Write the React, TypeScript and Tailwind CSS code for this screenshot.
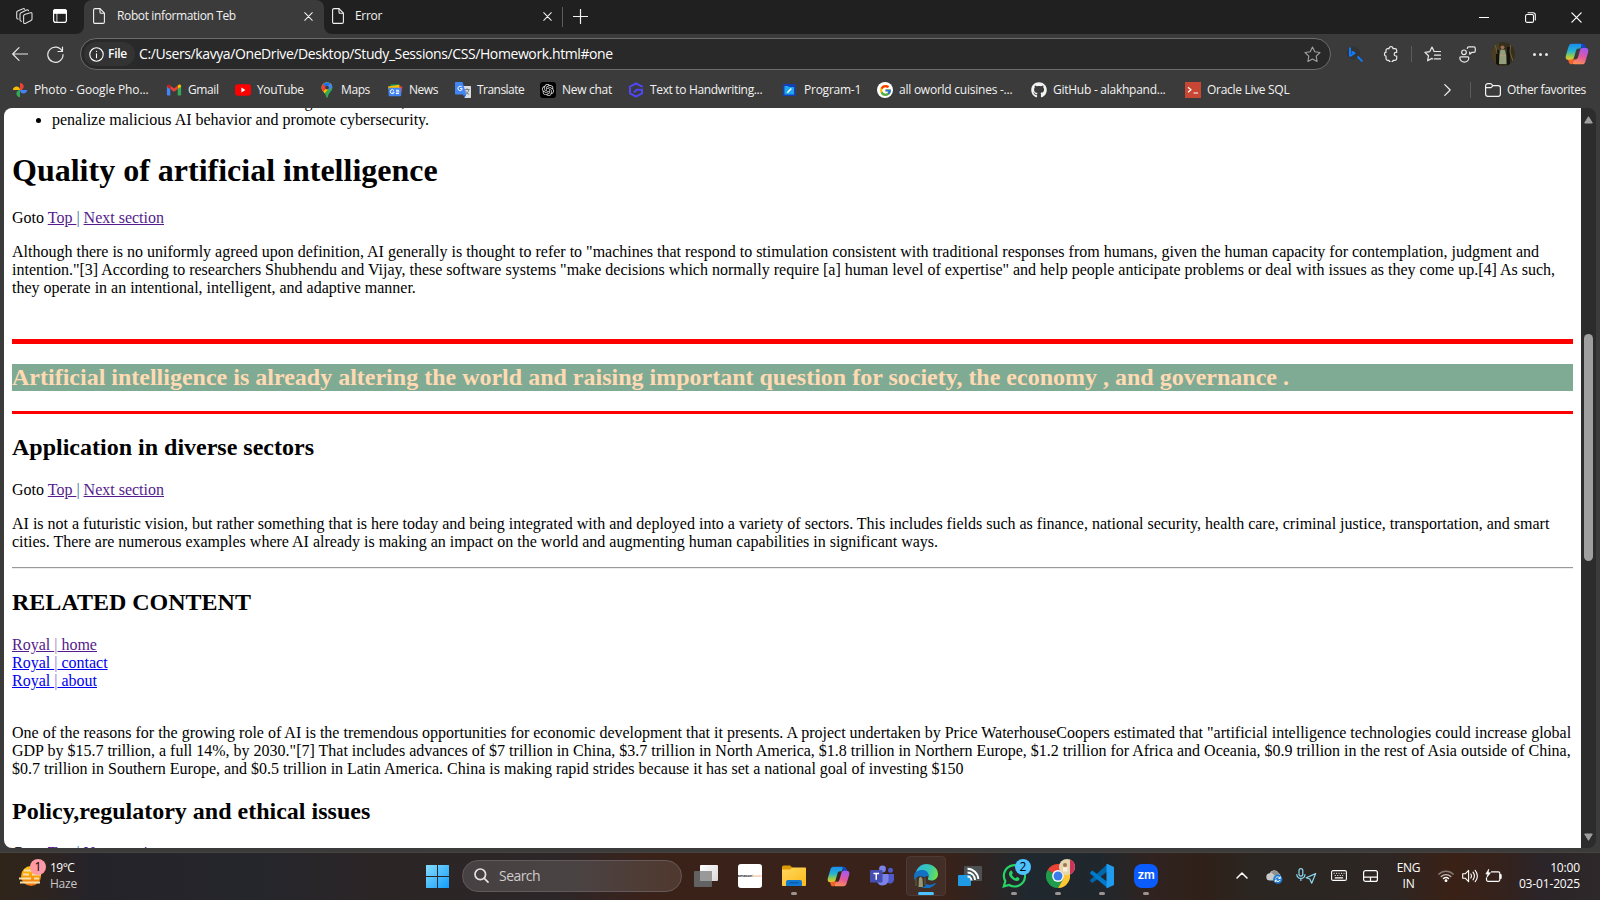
import type { ReactNode } from "react";
import { FcGoogle } from "react-icons/fc";
import { FaGithub } from "react-icons/fa";
import { SiOpenai } from "react-icons/si";

const line = { fill: "none", stroke: "currentColor", strokeLinecap: "round", strokeLinejoin: "round" } as const;

function PageIcon() {
  return (
    <svg width="12" height="16" viewBox="0 0 12 16" {...line} strokeWidth="1.1">
      <path d="M2 .6h5l4.400 4.600V14a1.400 1.400 0 0 1-1.400 1.400H2A1.400 1.400 0 0 1 .6 14V2A1.400 1.400 0 0 1 2 .6z" />
      <path d="M7 .8v3.400a1 1 0 0 0 1 1h3.200" />
    </svg>
  );
}

function CloseIcon({ size }: { size: number }) {
  return (
    <svg width={size} height={size} viewBox="0 0 10 10" {...line} strokeWidth="1.15">
      <path d="M.8.8l8.400 8.400M9.200.8L.8 9.200" />
    </svg>
  );
}

function Copilot({ size }: { size: number }) {
  return (
    <svg width={size} height={size} viewBox="0 0 24 24">
      <defs>
        <linearGradient id="cpA" x1="0" y1="0" x2="0" y2="1">
          <stop offset="0" stopColor="#1a8cf0" />
          <stop offset=".45" stopColor="#25b2d0" />
          <stop offset=".75" stopColor="#8ccb54" />
          <stop offset="1" stopColor="#f7c325" />
        </linearGradient>
        <linearGradient id="cpB" x1=".6" y1="0" x2=".3" y2="1">
          <stop offset="0" stopColor="#a459ee" />
          <stop offset=".5" stopColor="#e2589e" />
          <stop offset="1" stopColor="#fb9153" />
        </linearGradient>
      </defs>
      <path d="M16.500 4.300c-.5-1.800-1.200-2.600-2.800-2.600h4c1.700 0 2.300 1.200 2.800 3l.8 2.600h-4z" fill="#1746c4" />
      <path d="M6.800 1.700h8c1.400 0 1.900.8 1.500 2.200l-.8 2.700h-1.800c-1.500 0-2.300.8-2.800 2.400l-1.900 6.600c-.5 1.600-1.200 2.300-2.700 2.300H3.400C.9 17.900.2 16 .9 13.500L3.600 4.600C4.200 2.700 5 1.700 6.800 1.700z" fill="url(#cpA)" />
      <path d="M17.200 22.300h-8c-1.400 0-1.900-.8-1.500-2.200l.8-2.700h1.800c1.500 0 2.300-.8 2.800-2.400L15 8.400c.5-1.600 1.200-2.300 2.700-2.300h2.900c2.500 0 3.200 1.900 2.500 4.400l-2.700 8.900c-.6 1.900-1.400 2.900-3.200 2.900z" fill="url(#cpB)" />
      <path d="M7.500 17.400h3c-1 .6-1.700 1.300-2.100 2.600-.4 1.500-.6 2.300-2.200 2.300-1.500 0-2.100-1-2.500-2.500l-.5-2z" fill="#f0642f" />
    </svg>
  );
}

function PhotosLogo() {
  return (
    <svg width="16" height="16" viewBox="0 0 16 16">
      <path d="M8 1c2.200.1 3.700 1.700 3.700 3.600 0 1.600-1 2.700-2 3.400H8z" fill="#ea4335" />
      <path d="M8 8H.8C1 5.800 2.600 4.400 4.600 4.400S8 6 8 8z" fill="#fbbc04" />
      <path d="M8 8v7.200c-2.200-.2-3.600-1.800-3.600-3.800S6 8 8 8z" fill="#34a853" />
      <path d="M8 8h7.200c-.2 2.200-1.800 3.600-3.800 3.600S8 10 8 8z" fill="#4285f4" />
    </svg>
  );
}

function GmailLogo() {
  return (
    <svg width="16" height="16" viewBox="0 0 16 16">
      <path d="M.9 4v8.400c0 .7.5 1.200 1.200 1.200h2.200V7z" fill="#4285f4" />
      <path d="M15.100 4v8.400c0 .7-.5 1.200-1.200 1.200h-2.200V7z" fill="#34a853" />
      <path d="M11.700 7V3.600l.8-.7c1.100-.9 2.600-.1 2.600 1.300v.6z" fill="#fbbc04" />
      <path d="M4.300 7V3.600L8 6.400l3.700-2.800V7L8 9.800z" fill="#ea4335" />
      <path d="M.9 4.800v-.6c0-1.400 1.500-2.200 2.600-1.300l.8.7V7z" fill="#c5221f" />
    </svg>
  );
}

function YouTubeLogo() {
  return (
    <svg width="16" height="16" viewBox="0 0 16 16">
      <rect x="0" y="2.300" width="16" height="11.400" rx="3" fill="#f00" />
      <path d="M6.400 5.600v4.800l4-2.400z" fill="#fff" />
    </svg>
  );
}

function MapsLogo() {
  return (
    <svg width="16" height="16" viewBox="0 0 16 16">
      <clipPath id="pin">
        <path d="M8 .3a5.300 5.300 0 0 1 5.400 5.300c0 3.700-3.700 4.800-4.600 9.400-.2.900-1.400.9-1.600 0C6.300 10.400 2.600 9.300 2.600 5.600A5.300 5.300 0 0 1 8 .3z" />
      </clipPath>
      <g clipPath="url(#pin)">
        <rect width="16" height="16" fill="#34a853" />
        <path d="M0 0h16L4 13H0z" fill="#fbbc04" />
        <path d="M8 5.500L2 12V0h4z" fill="#ea4335" />
        <path d="M4 2l4 3.500L13 0H5z" fill="#1a73e8" />
        <path d="M8 5.500L12 1l3 3-5 4z" fill="#4285f4" />
      </g>
      <circle cx="8" cy="5.600" r="1.900" fill="#3b3b3b" />
    </svg>
  );
}

function NewsLogo() {
  return (
    <svg width="16" height="16" viewBox="0 0 16 16">
      <path d="M3.500 2.200l9 .2v5h-9z" fill="#0c9d58" />
      <path d="M1 4.600l11-1.800 1.500 4L2 9z" fill="#fbbc04" />
      <path d="M12 3.600l3.500 1.300L14 12z" fill="#ea4335" />
      <rect x="1.600" y="5.700" width="12.600" height="8.500" rx="1" fill="#4285f4" />
      <path d="M7 8.600a2 2 0 1 0 .2 1.600H5.600M9 8.300h3M9 9.900h3.400M9 11.500h3" stroke="#fff" strokeWidth="1" fill="none" />
    </svg>
  );
}

function TranslateLogo() {
  return (
    <svg width="16" height="16" viewBox="0 0 16 16">
      <path d="M6 4h9c.6 0 1 .4 1 1v10c0 .6-.4 1-1 1H9.500z" fill="#dadce0" />
      <path d="M9.500 7.500h5M12 6.300v1.200M13.800 7.700c-.5 2.200-1.800 3.700-3.600 4.600M10.400 8.700c.7 1.500 2 2.900 3.700 3.700" stroke="#6d7378" strokeWidth=".9" fill="none" />
      <path d="M1 0h6.500l3.800 12.500H1c-.6 0-1-.4-1-1V1c0-.6.400-1 1-1z" fill="#4285f4" />
      <path d="M6.800 5a2.200 2.200 0 1 0 .5 1.700H5" stroke="#fff" strokeWidth="1" fill="none" />
      <path d="M8 12.500h3.300L9.500 16z" fill="#1967d2" />
    </svg>
  );
}

function ChatLogo() {
  return (
    <span className="flex size-4 items-center justify-center rounded-[3px] bg-black text-[#e0e0e0]">
      <SiOpenai size={12} />
    </span>
  );
}

function HexLogo() {
  return (
    <svg width="16" height="16" viewBox="0 0 16 16" fill="none" stroke="#4f46f5" strokeWidth="2">
      <path d="M14 5V4.700L8 1.300 2 4.700v6.600l6 3.400 6-3.400V7.800H8.500L6 10.500" />
    </svg>
  );
}

function ProgramLogo() {
  return (
    <svg width="16" height="16" viewBox="0 0 16 16">
      <rect x="1" y="2" width="12.500" height="12" fill="#1240b8" />
      <path d="M2.500 4h3.500l1 1H12v7.500H2.500z" fill="#1ea7f0" />
      <path d="M5.300 10.800l4-4.300" stroke="#fff" strokeWidth="1.400" />
    </svg>
  );
}

function GoogleDisc() {
  return (
    <span className="flex size-4 items-center justify-center rounded-full bg-white">
      <FcGoogle size={13} />
    </span>
  );
}

function OracleLogo() {
  return (
    <svg width="16" height="16" viewBox="0 0 16 16">
      <rect width="16" height="16" fill="#c74634" />
      <path d="M3 5.200l3 2.500-3 2.500M8.500 11h4.500" stroke="#fff" strokeWidth="1.200" fill="none" />
    </svg>
  );
}

function Bookmark({ icon, label, className }: { icon: ReactNode; label: string; className: string }) {
  return (
    <div className={`flex h-full shrink-0 items-center gap-[6px] whitespace-nowrap ${className}`}>
      <span className="flex size-4 shrink-0 items-center justify-center">{icon}</span>
      <span>{label}</span>
    </div>
  );
}

function TabStrip() {
  return (
    <div className="flex h-[34px] bg-[#202020] text-[12px] text-[#f2f2f2]">
      <div className="flex w-[84px] items-center pb-[2px] pl-4">
        <svg width="17" height="17" viewBox="0 0 17 17" {...line} strokeWidth="1.100" className="text-[#dcdcdc]">
          <path d="M7.600 7.600v6.700c0 1.100.9 1.500 1.700 1.100l5.700-2.900c.7-.3 1-.8 1-1.500V5.700c0-1-.8-1.400-1.600-1L8.600 6.500c-.7.4-1 .8-1 1.600z" />
          <path d="M5.500 13.200c-1 0-1.500-.6-1.500-1.500V6.300c0-.8.300-1.200 1-1.600L10.700 2c.9-.4 1.700 0 1.800.8" />
          <path d="M2.200 11C1.200 11 .7 10.400.7 9.500V4.600c0-.8.300-1.300 1-1.600L7 .8c.9-.4 1.700 0 1.800.7" />
        </svg>
        <svg width="14" height="14" viewBox="0 0 14 14" {...line} strokeWidth="1.200" className="ml-5 text-white">
          <rect x=".6" y=".6" width="12.800" height="12.800" rx="2.200" />
          <path d="M.6 2.800C.6 1.500 1.500.6 2.800.6h8.400c1.300 0 2.200.9 2.200 2.200v1.400H.6z" fill="currentColor" />
          <path d="M3.900 4v9" strokeWidth=".8" />
        </svg>
      </div>
      <div className="relative flex w-[240px] items-center rounded-t-lg bg-[#3b3b3b] pb-[2px] pl-[9px]">
        <svg className="absolute bottom-0 -left-2" width="8" height="8"><path d="M8 0v8H0a8 8 0 0 0 8-8z" fill="#3b3b3b" /></svg>
        <svg className="absolute -right-2 bottom-0" width="8" height="8"><path d="M0 0v8h8a8 8 0 0 1-8-8z" fill="#3b3b3b" /></svg>
        <PageIcon />
        <span className="ml-3 w-[187px] tracking-[-0.370px] whitespace-nowrap">Robot information Teb</span>
        <CloseIcon size={9} />
      </div>
      <div className="flex w-[239px] items-center pb-[2px] pl-2">
        <PageIcon />
        <span className="ml-[11px] w-[188px] tracking-[-0.300px]">Error</span>
        <CloseIcon size={9} />
      </div>
      <div className="mt-[7px] -ml-px h-5 w-px bg-[#5c5c5c]" />
      <div className="ml-[10px] flex items-center pb-[2px]">
        <svg width="15" height="15" viewBox="0 0 15 15" {...line} strokeWidth="1.200"><path d="M7.500.5v14M.5 7.500h14" /></svg>
      </div>
      <div className="mr-px ml-auto flex items-center text-white">
        <div className="flex w-[46px] justify-center"><svg width="10" height="10" viewBox="0 0 10 10" {...line}><path d="M0 5.500h10" /></svg></div>
        <div className="flex w-[46px] justify-center">
          <svg width="11" height="11" viewBox="0 0 11 11" {...line} strokeWidth="1.100"><rect x=".6" y="2.500" width="7.900" height="7.900" rx="1.500" /><path d="M3 .7h5c1.400 0 2.300.9 2.300 2.300v5" /></svg>
        </div>
        <div className="flex w-[46px] justify-center"><CloseIcon size={11} /></div>
      </div>
    </div>
  );
}

function Toolbar() {
  return (
    <div className="flex h-10 items-center text-[#e8e8e8]">
      <svg width="16" height="14" viewBox="0 0 16 14" {...line} strokeWidth="1.200" className="ml-3"><path d="M15.500 7H.7M7 .7L.7 7 7 13.300" /></svg>
      <svg width="17" height="17" viewBox="0 0 17 17" {...line} strokeWidth="1.200" className="ml-[19px]"><path d="M15.200 5.300A7.600 7.600 0 1 0 16 8.600M15.500 1v4.500H11" /></svg>
      <div className="ml-4 flex h-8 w-[1251px] shrink-0 items-center rounded-full border border-[#6c6c6c] bg-[#292929] pl-[3px] text-white">
        <div className="flex h-6 w-[51px] items-center rounded-full bg-[#333333] pl-[5px]">
          <svg width="15" height="15" viewBox="0 0 15 15" {...line} strokeWidth="1.100"><circle cx="7.500" cy="7.500" r="6.700" /><path d="M7.500 6.800v4M7.500 4.300v.1" /></svg>
          <span className="ml-[4px] text-[12px] font-semibold tracking-[-0.250px]">File</span>
        </div>
        <span className="ml-[4px] text-[14px] leading-5 tracking-[-0.400px] whitespace-nowrap">C:/Users/kavya/OneDrive/Desktop/Study_Sessions/CSS/Homework.html#one</span>
        <svg width="17" height="17" viewBox="0 0 17 17" {...line} strokeWidth="1.100" className="mr-[9px] ml-auto text-[#a0a0a0]"><path d="M8.500 1l2.300 4.800 5.200.7-3.800 3.700.9 5.300-4.600-2.500-4.600 2.500.9-5.300L1 6.500l5.200-.7z" /></svg>
      </div>
      <div className="flex w-12 justify-center">
        <svg width="16" height="16" viewBox="0 0 16 16"><circle cx="6.500" cy="7" r="6.500" fill="#343434" /><path d="M3 1.500v8.300l4.500-2.600-3-1.700" fill="none" stroke="#0f7bff" strokeWidth="2" strokeLinejoin="round" /><path d="M10.500 10.500l5 5" stroke="#0f7bff" strokeWidth="1.800" /></svg>
      </div>
      <div className="flex w-6 justify-center">
        <svg width="16" height="16" viewBox="0 0 16 16" {...line} strokeWidth="1.200"><path d="M6 2.700a2 2 0 0 1 4 0H12a1.700 1.700 0 0 1 1.700 1.700v1.900H13a1.800 1.800 0 0 0 0 3.700h.7v2.600A1.700 1.700 0 0 1 12 14.300h-2a2 2 0 0 1-4 0H4.700A1.700 1.700 0 0 1 3 12.600V10.100a2 2 0 0 1 0-3.900V4.400a1.700 1.700 0 0 1 1.700-1.700z" /></svg>
      </div>
      <div className="ml-2 h-4 w-px bg-[#5c5c5c]" />
      <div className="ml-[11px] flex w-[18px] justify-center">
        <svg width="17" height="17" viewBox="0 0 17 17" {...line} strokeWidth="1.200"><path d="M10.500 5.500h-.4L8 1 5.800 5.600.9 6.300l3.600 3.500-.9 5L8 12.400l.8.500M10.500 5.500H16.500M10.500 9.200h6M10.500 12.900h6" /></svg>
      </div>
      <div className="ml-[17px] flex w-[18px] justify-center">
        <svg width="17" height="17" viewBox="0 0 17 17" {...line} strokeWidth="1.200"><circle cx="5" cy="6.300" r="2.300" /><path d="M1.800 10.800h7c.6 0 1 .4 1 1 0 2.400-1.800 4.400-4.400 4.400S.8 14.200.8 11.800c0-.6.400-1 1-1zM8.300 2.400C8.300 1.400 9 .8 9.900.8h4.800c.9 0 1.600.6 1.600 1.600v2.300c0 .9-.7 1.600-1.600 1.600H13l-2.300 1.900V6.200" /></svg>
      </div>
      <div className="ml-[15px] flex size-6 shrink-0 overflow-hidden rounded-full">
        <svg width="24" height="24" viewBox="0 0 24 24"><rect width="24" height="24" fill="#352f1c" /><path d="M0 3l8-3 1 10-4 14H0z" fill="#473e25" /><path d="M16 5h3v19h-3zM5 8h3v16H5z" fill="#14120c" /><path d="M3 0l2 6 1 6M20 0l-1 10 3 9" stroke="#716039" fill="none" /><path d="M9.500 7.500l4.500.2 1.200 6L15.500 22H8l.5-9z" fill="#939e7c" /><circle cx="11.500" cy="5.300" r="1.900" fill="#9c6d4e" /><path d="M9 13.500l3 .5 3-1" stroke="#c39a75" fill="none" /></svg>
      </div>
      <div className="ml-[17px] flex w-4 justify-center gap-[3px]">
        <i className="size-[3px] rounded-full bg-current" /><i className="size-[3px] rounded-full bg-current" /><i className="size-[3px] rounded-full bg-current" />
      </div>
      <div className="ml-[17px]"><Copilot size={24} /></div>
    </div>
  );
}

function FavoritesBar() {
  return (
    <div className="flex h-[34px] items-center pb-[2px] pl-3 text-[12px] text-[#f2f2f2]">
      <Bookmark className="w-[154px] tracking-[-0.130px]" icon={<PhotosLogo />} label="Photo - Google Pho..." />
      <Bookmark className="w-[69px] tracking-[-0.400px]" icon={<GmailLogo />} label="Gmail" />
      <Bookmark className="w-[84px] tracking-[-0.400px]" icon={<YouTubeLogo />} label="YouTube" />
      <Bookmark className="w-[68px] tracking-[-0.400px]" icon={<MapsLogo />} label="Maps" />
      <Bookmark className="w-[68px] tracking-[-0.480px]" icon={<NewsLogo />} label="News" />
      <Bookmark className="w-[85px] tracking-[-0.540px]" icon={<TranslateLogo />} label="Translate" />
      <Bookmark className="w-[88px] tracking-[-0.290px]" icon={<ChatLogo />} label="New chat" />
      <Bookmark className="w-[154px] tracking-[-0.340px]" icon={<HexLogo />} label="Text to Handwriting..." />
      <Bookmark className="w-[95px] tracking-[-0.240px]" icon={<ProgramLogo />} label="Program-1" />
      <Bookmark className="w-[154px] tracking-[-0.240px]" icon={<GoogleDisc />} label="all oworld cuisines -..." />
      <Bookmark className="w-[154px] tracking-[-0.260px]" icon={<FaGithub size={16} />} label="GitHub - alakhpand..." />
      <Bookmark className="w-[259px] tracking-[-0.300px]" icon={<OracleLogo />} label="Oracle Live SQL" />
      <svg width="7" height="12" viewBox="0 0 7 12" {...line} strokeWidth="1.200"><path d="M.8.600L6.200 6 .8 11.400" /></svg>
      <div className="mr-[14px] ml-[19px] h-4 w-px bg-[#5c5c5c]" />
      <Bookmark
        className="tracking-[-0.360px]"
        icon={<svg width="16" height="14" viewBox="0 0 16 14" {...line} strokeWidth="1.200"><path d="M.6 3C.6 1.600 1.400.7 2.800.7h2.500c.5 0 .9.2 1.200.5l1.300 1.400h5.400c1.300 0 2.200.9 2.200 2.200v6.300c0 1.300-.9 2.200-2.200 2.200H2.800C1.500 13.300.6 12.400.6 11.100zM.6 4.700h4.600c.5 0 .8-.1 1.100-.4l1.500-1.500" /></svg>}
        label="Other favorites"
      />
    </div>
  );
}

function VisitedLink({ children }: { children: ReactNode }) {
  return <a className="text-[#551a8b] underline">{children}</a>;
}

function Goto() {
  return (
    <p>
      Goto <VisitedLink>Top </VisitedLink><span className="text-[#3d6a94]">|</span> <VisitedLink>Next section</VisitedLink>
    </p>
  );
}

function Line({ children }: { children: ReactNode }) {
  return <span className="block whitespace-nowrap">{children}</span>;
}

function Bar({ color }: { color: "visited" | "plain" }) {
  return <span className={color === "visited" ? "text-[#a475b8]" : "text-[#8c68e0]"}>|</span>;
}

function Article() {
  return (
    <div className="h-[740px] w-[1577px] overflow-hidden rounded-l-lg bg-white px-2 text-black">
      <div className="-mt-[15px] font-['Liberation_Serif',serif] text-[16px] leading-[18px]">
        <ul className="list-disc pl-10">
          <li>maintain mechanisms for human oversight and control, and</li>
          <li>penalize malicious AI behavior and promote cybersecurity.</li>
        </ul>
        <h1 className="mt-[23px] text-[32px] leading-[37px] font-bold">Quality of artificial intelligence</h1>
        <div className="mt-5"><Goto /></div>
        <p className="mt-4">
          <Line>Although there is no uniformly agreed upon definition, AI generally is thought to refer to "machines that respond to stimulation consistent with traditional responses from humans, given the human capacity for contemplation, judgment and</Line>
          <Line>intention."[3] According to researchers Shubhendu and Vijay, these software systems "make decisions which normally require [a] human level of expertise" and help people anticipate problems or deal with issues as they come up.[4] As such,</Line>
          <Line>they operate in an intentional, intelligent, and adaptive manner.</Line>
        </p>
        <hr className="mt-[42px] h-[5px] border-0 bg-[#ff0000]" />
        <h2 className="mt-5 bg-[#7faa93] text-[24px] leading-[27px] font-bold text-[#ffdab3]">Artificial intelligence is already altering the world and raising important question for society, the economy , and governance .</h2>
        <hr className="mt-5 h-[3px] border-0 bg-[#ff0000]" />
        <h2 className="mt-5 text-[24px] leading-[27px] font-bold">Application in diverse sectors</h2>
        <div className="mt-5"><Goto /></div>
        <p className="mt-4">
          <Line>AI is not a futuristic vision, but rather something that is here today and being integrated with and deployed into a variety of sectors. This includes fields such as finance, national security, health care, criminal justice, transportation, and smart</Line>
          <Line>cities. There are numerous examples where AI already is making an impact on the world and augmenting human capabilities in significant ways.</Line>
        </p>
        <hr className="mt-4 h-[2px] border-t border-b border-t-[#9a9a9a] border-b-[#eeeeee]" />
        <h2 className="mt-5 text-[24px] leading-[27px] font-bold">RELATED CONTENT</h2>
        <div className="mt-5">
          <Line><a className="text-[#551a8b] underline">Royal <Bar color="visited" /> home</a></Line>
          <Line><a className="text-[#0000ee] underline">Royal <Bar color="plain" /> contact</a></Line>
          <Line><a className="text-[#0000ee] underline">Royal <Bar color="plain" /> about</a></Line>
        </div>
        <p className="mt-[34px]">
          <Line>One of the reasons for the growing role of AI is the tremendous opportunities for economic development that it presents. A project undertaken by Price WaterhouseCoopers estimated that "artificial intelligence technologies could increase global</Line>
          <Line>GDP by $15.7 trillion, a full 14%, by 2030."[7] That includes advances of $7 trillion in China, $3.7 trillion in North America, $1.8 trillion in Northern Europe, $1.2 trillion for Africa and Oceania, $0.9 trillion in the rest of Asia outside of China,</Line>
          <Line>$0.7 trillion in Southern Europe, and $0.5 trillion in Latin America. China is making rapid strides because it has set a national goal of investing $150</Line>
        </p>
        <h2 className="mt-5 text-[24px] leading-[27px] font-bold">Policy,regulatory and ethical issues</h2>
        <div className="mt-[19px]"><Goto /></div>
      </div>
    </div>
  );
}

function Scrollbar() {
  return (
    <div className="flex h-[740px] w-[15px] flex-col items-center rounded-r-lg bg-[#2c2c2c]">
      <svg width="9" height="8" viewBox="0 0 9 8" className="mt-2"><path d="M4.500.7L8.300 7H.7z" fill="#9f9f9f" stroke="#9f9f9f" strokeLinejoin="round" /></svg>
      <div className="mt-[210px] h-[227px] w-[9px] rounded-full bg-[#9f9f9f]" />
      <svg width="9" height="8" viewBox="0 0 9 8" className="mt-auto mb-[7px]"><path d="M4.500 7.300L.7 1h7.600z" fill="#9f9f9f" stroke="#9f9f9f" strokeLinejoin="round" /></svg>
    </div>
  );
}

function TaskItem({ children, mark }: { children: ReactNode; mark?: "dot" | "active" }) {
  return (
    <div className="relative flex h-10 w-11 items-center justify-center">
      {mark === "active" && <span className="absolute inset-x-[2px] inset-y-0 rounded-[4px] border border-[#4d3a34] bg-[#432e27]" />}
      <span className="relative flex size-6 items-center justify-center">{children}</span>
      {mark === "dot" && <span className="absolute bottom-px h-[3px] w-[6px] rounded-full bg-[#9b9492]" />}
      {mark === "active" && <span className="absolute bottom-px h-[3px] w-4 rounded-full bg-[#4cc2ff]" />}
    </div>
  );
}

function Taskbar() {
  return (
    <div className="flex h-12 items-center border-t border-[#47433f] bg-linear-[90deg,#30251a_0px,#2d2420_45px,#25232a_90px,#25262c_260px,#2c2526_380px,#2d2628_560px,#3a2219_650px,#38221a_950px,#20282f_1030px,#20272c_1100px,#302320_1150px,#2f2019_1200px,#2b2622_1260px,#2d2623_1390px,#3a2116_1450px,#35221c_1500px,#2b2428_1540px,#2d2829_1600px] pb-px text-[12px] text-white">
      <div className="flex w-[426px] items-center pb-px pl-[18px]">
        <div className="relative size-7">
          <svg width="24" height="28" viewBox="0 0 24 28" className="overflow-visible">
            <defs><linearGradient id="sun" x1="0" y1="0" x2="0" y2="1"><stop offset="0" stopColor="#ffc912" /><stop offset="1" stopColor="#f2700b" /></linearGradient></defs>
            <circle cx="13" cy="14" r="10" fill="url(#sun)" />
            <path d="M6 8.500h9M5 12.500h6M14 12.500h9M1 16.500h12M16 16.500h5M2 20.500h20" stroke="#f6dfa8" strokeWidth="1.800" />
          </svg>
          <span className="absolute -top-[3px] left-3 flex size-4 items-center justify-center rounded-full bg-[#ff99a4] text-[12px] leading-none text-black">1</span>
        </div>
        <div className="ml-1 leading-4">
          <div className="tracking-[-0.500px]">19°C</div>
          <div className="tracking-[-0.250px] text-[#c9c7c9]">Haze</div>
        </div>
      </div>
      <svg width="23" height="23" viewBox="0 0 23 23">
        <defs><linearGradient id="win" x1="0" y1="0" x2="1" y2="1"><stop offset="0" stopColor="#85ddfd" /><stop offset="1" stopColor="#0f9dfb" /></linearGradient></defs>
        <path d="M0 .5a.5.500 0 0 1 .5-.5H11v11H0zM12 0h10.500a.5.500 0 0 1 .5.500V11H12zM0 12h11v11H.5a.5.500 0 0 1-.5-.5zM12 12h11v10.500a.5.500 0 0 1-.5.500H12z" fill="url(#win)" />
      </svg>
      <div className="ml-[13px] flex h-8 w-[220px] items-center rounded-full border border-[#64595a] bg-linear-to-r from-[#464142] via-[#4a4344] to-[#50382d] pb-px pl-[11px] text-[14px] text-[#cfcbcb]">
        <svg width="15" height="15" viewBox="0 0 15 15" {...line} strokeWidth="1.700" className="text-[#e4e2e2]"><circle cx="6.300" cy="6.300" r="5.300" /><path d="M10.300 10.300l3.700 3.900" /></svg>
        <span className="ml-[10px] tracking-[-0.550px]">Search</span>
      </div>
      <div className="ml-[2px] flex">
        <TaskItem>
          <svg width="24" height="24" viewBox="0 0 24 24"><defs><linearGradient id="tv" x1="0" y1="0" x2="1" y2="1"><stop offset="0" stopColor="#fff" /><stop offset="1" stopColor="#d8d8d8" /></linearGradient></defs><rect x="6" y="1" width="18" height="16" rx="1" fill="url(#tv)" /><rect x="0" y="7" width="18" height="16" rx="1" fill="#626262" /><rect x="6" y="7" width="12" height="10" fill="#999" /></svg>
        </TaskItem>
        <TaskItem>
          <span className="flex size-6 items-center justify-center overflow-hidden rounded-[3px] bg-white text-[4px] leading-none font-bold tracking-[-0.200px] text-[#333]">amazon<span className="font-normal text-[#f39a52]">basics</span></span>
        </TaskItem>
        <TaskItem mark="dot">
          <svg width="24" height="24" viewBox="0 0 24 24"><defs><linearGradient id="fd" x1="0" y1="0" x2="1" y2="1"><stop offset="0" stopColor="#ffd95e" /><stop offset="1" stopColor="#fcb81b" /></linearGradient></defs><path d="M0 3a1.500 1.500 0 0 1 1.500-1.500H8L11 4v6H0z" fill="#dc9b06" /><path d="M0 5.500h8l2.500-2H23c.6 0 1 .4 1 1V21c0 .6-.4 1-1 1H1c-.6 0-1-.4-1-1z" fill="url(#fd)" /><path d="M4 22v-4a2 2 0 0 1 2-2h12a2 2 0 0 1 2 2v4z" fill="#0f79d3" /><path d="M7.500 18.800h9" stroke="#0a559e" strokeWidth="1.200" /></svg>
        </TaskItem>
        <TaskItem><Copilot size={23} /></TaskItem>
        <TaskItem>
          <svg width="24" height="24" viewBox="0 0 24 24"><circle cx="12.500" cy="5" r="3.400" fill="#7b83eb" /><circle cx="20.500" cy="6.300" r="2.500" fill="#5059c9" /><path d="M16 10h7.500c.3 0 .5.2.5.5v5a4 4 0 0 1-6 3.400z" fill="#5059c9" /><path d="M8 10h9.500c.5 0 1 .5 1 1v5.500a6 6 0 0 1-11.500 1z" fill="#7b83eb" /><rect y="6" width="12.500" height="12.500" rx="1.200" fill="#454dae" /><path d="M3.400 9.500h5.700M6.250 9.500v6.300" stroke="#fff" strokeWidth="1.500" /></svg>
        </TaskItem>
        <TaskItem mark="active">
          <svg width="24" height="24" viewBox="0 0 24 24"><defs><linearGradient id="ed" x1="0" y1=".3" x2="1" y2=".5"><stop offset="0" stopColor="#2bb7e8" /><stop offset=".6" stopColor="#37c7b1" /><stop offset="1" stopColor="#6be34d" /></linearGradient></defs><path d="M1 14A12 12 0 0 1 3 5.500 11.500 11.500 0 0 1 12 0c7 0 12 4.500 12 10 0 4-3 6.500-6.500 6.500-2.500 0-4-1-3.500-2.300.9-1.500.8-4.200-1.500-5.700-3.500-2.200-9.300-.3-11.500 5.500z" fill="url(#ed)" /><path d="M.3 10C2 7 5.500 5.500 9 6c4.500.7 6 3.500 5.500 6.500-3-1-5.500 1-4.500 4.500s5.500 5.500 11 2c.6-.3 1 .2.6.8A12 12 0 0 1 .3 10z" fill="#1270c5" /><circle cx="6.500" cy="18" r="6" fill="#3a3425" /><path d="M5 14l2-1.500L8.500 15 9 23H4.500z" fill="#98967a" /><path d="M2 14v8M11 14v7" stroke="#6a5c42" /></svg>
        </TaskItem>
        <TaskItem>
          <svg width="24" height="24" viewBox="0 0 24 24"><rect x="6" y="2" width="18" height="15" rx="1" fill="#4d5153" /><rect y="11" width="13" height="11" rx="1" fill="#1e9be4" /><path d="M9.500 12.500a4 4 0 0 1 4 4M9.500 8.500a7.500 7.500 0 0 1 7.500 7.500M9.500 4.700A11 11 0 0 1 20.300 15" stroke="#fff" strokeWidth="1.900" fill="none" /></svg>
        </TaskItem>
        <TaskItem mark="dot">
          <svg width="24" height="24" viewBox="0 0 24 24"><path d="M1.800 22.400l1.500-5.300A10.600 10.600 0 1 1 7.200 21z" fill="none" stroke="#25d366" strokeWidth="2.200" /><path d="M8.700 6.800c.5-.5 1-.3 1.300.4l.8 1.900c0 .6-.9 1.300-.9 1.600.7 1.600 2 2.800 3.700 3.500.5 0 1-1.200 1.500-1.200l2.200 1.100c.5.700-.2 2.500-1.900 2.900-2.700.5-7.400-2.800-8.300-6.200-.4-1.700.5-3.200 1.600-4z" fill="#25d366" /></svg>
          <span className="absolute -top-[5px] -right-[5px] flex size-4 items-center justify-center rounded-full bg-[#4cc2ff] text-[12px] leading-none text-black">2</span>
        </TaskItem>
        <TaskItem mark="dot">
          <svg width="24" height="24" viewBox="0 0 24 24"><path d="M12 12L1.600 6A12 12 0 0 1 22.400 6z" fill="#ea4335" /><path d="M12 12L1.600 6A12 12 0 0 0 12 24l5.200-9z" fill="#1f9d4c" /><path d="M22.400 6A12 12 0 0 1 12 24l5.200-9L17 6z" fill="#fcc934" /><circle cx="12" cy="12" r="5.900" fill="#fff" /><circle cx="12" cy="12" r="4.500" fill="#3a7cec" /></svg>
          <svg className="absolute -top-[5px] -right-[5px]" width="16" height="16" viewBox="0 0 16 16"><circle cx="8" cy="8" r="8" fill="#e6d6b0" /><path d="M11 .6A8 8 0 0 1 11 15.400z" fill="#c93458" /><circle cx="6" cy="6" r="2" fill="#9b7651" /><path d="M4 8.500h4.500v4H4z" fill="#f7eedb" /></svg>
        </TaskItem>
        <TaskItem mark="dot">
          <svg width="24" height="24" viewBox="0 0 24 24"><path d="M17.500 0v7.500L3 18.500c-.5.400-1 .3-1.400 0L.4 17.300c-.5-.5-.5-1 0-1.500z" fill="#0065a9" /><path d="M.4 8.200l1.200-1.100c.4-.4.9-.4 1.400-.1l14.500 11V24L.4 9.700c-.5-.5-.5-1 0-1.500z" fill="#007acc" /><path d="M17.500 0L24 3v18l-6.500 3c-.8.1-1-.2-1-.6V.6c0-.4.300-.7 1-.6z" fill="#1f9cf0" /></svg>
        </TaskItem>
        <TaskItem mark="dot">
          <span className="flex size-6 items-center justify-center rounded-[8px] bg-[#0b5cff] pb-[2px] font-['Inter',sans-serif] text-[12px] leading-none font-semibold tracking-[-0.300px] text-white">zm</span>
        </TaskItem>
      </div>
      <div className="ml-auto flex items-center pb-px">
        <svg width="12" height="7" viewBox="0 0 12 7" {...line} strokeWidth="1.500"><path d="M1 6l5-5 5 5" /></svg>
        <svg width="17" height="14" viewBox="0 0 17 14" className="mt-[2px] ml-[18px]"><path d="M4 10.500A3.600 3.600 0 0 1 3.800 3.300 4.800 4.800 0 0 1 12.600 3a3.700 3.700 0 0 1 2 3.500L9 10.500z" fill="#c9c9c9" /><path d="M5 2.200A4.800 4.800 0 0 1 12.600 3l.8 2-4 1z" fill="#919191" /><circle cx="11.800" cy="9.200" r="4.600" fill="#1f7bd0" /><path d="M9.400 8.500c.7-2 3.700-2.200 4.700-.3M14.200 9.900c-.7 2-3.700 2.200-4.700.3M14.300 6.500v1.900h-1.900M9.300 12v-1.900h1.900" stroke="#fff" fill="none" /></svg>
        <svg width="21" height="16" viewBox="0 0 21 16" {...line} strokeWidth="1.200" className="ml-[13px] text-[#8bd9f0]"><rect x="3" y=".6" width="3.800" height="7.500" rx="1.900" /><path d="M.8 6.500c.2 2.500 1.800 3.900 4.100 3.900S8.800 9 9 6.500M4.900 10.500v2M19.700 5.600l-4 9.600-1.900-4.200-3.600-1.300z" /></svg>
        <svg width="16" height="11" viewBox="0 0 16 11" {...line} strokeWidth="1.100" className="ml-[14px]"><rect x=".6" y=".6" width="14.800" height="9.800" rx="1.500" /><path d="M3 3.300h.2M5.500 3.300h.2M8 3.300h.2M10.500 3.300h.2M13 3.300h.1M4.200 5.500h.2M6.700 5.500h.2M9.200 5.500h.2M11.700 5.500h.1M4.200 7.900h7.500" /></svg>
        <svg width="15" height="12" viewBox="0 0 15 12" {...line} strokeWidth="1.200" className="ml-4"><rect x=".6" y=".6" width="13.800" height="10.800" rx="2" /><path d="M.6 7.200h13.800M7.500 7.200v4.200" /></svg>
        <div className="ml-[15px] w-[31px] text-center leading-4 tracking-[-0.300px]"><div>ENG</div><div>IN</div></div>
        <svg width="16" height="12" viewBox="0 0 16 12" {...line} strokeWidth="1.300" className="ml-[14px]"><path d="M.8 4.200a10.300 10.300 0 0 1 14.400 0" opacity=".4" /><path d="M3.200 6.500a7 7 0 0 1 9.600 0" opacity=".7" /><path d="M5.400 8.600a4 4 0 0 1 5.200 0" /><circle cx="8" cy="10.600" r=".8" fill="currentColor" /></svg>
        <svg width="16" height="14" viewBox="0 0 16 14" {...line} strokeWidth="1.100" className="ml-2"><path d="M.7 4.800h2.500L6.600 1.300v11.400L3.200 9.200H.7zM8.800 5c.8 1.200.8 2.800 0 4M11 3.200c1.700 2.300 1.700 5.300 0 7.600M13.200 1.300c2.600 3.400 2.600 8 0 11.400" /></svg>
        <svg width="17" height="14" viewBox="0 0 17 14" {...line} strokeWidth="1.200" className="ml-[7px]"><path d="M6.500 2.800h6.800c.9 0 1.500.6 1.500 1.500v6.500c0 .9-.6 1.500-1.500 1.500H3c-.9 0-1.500-.6-1.500-1.500V9" /><path d="M15.700 6v3" strokeWidth="2" /><path d="M3.600.4L.8 5h2L1.800 8.500 5.500 3.700H3.400z" fill="currentColor" strokeWidth=".6" /></svg>
        <div className="mr-5 w-[78px] text-right leading-4 tracking-[-0.150px] whitespace-nowrap"><div>10:00</div><div>03-01-2025</div></div>
      </div>
    </div>
  );
}

export default function App() {
  return (
    <div className="flex h-[900px] w-[1600px] flex-col overflow-hidden bg-[#3b3b3b] font-['Open_Sans','Noto_Sans',sans-serif]">
      <TabStrip />
      <Toolbar />
      <FavoritesBar />
      <div className="flex h-[744px] shrink-0 pl-1">
        <Article />
        <Scrollbar />
      </div>
      <Taskbar />
    </div>
  );
}
